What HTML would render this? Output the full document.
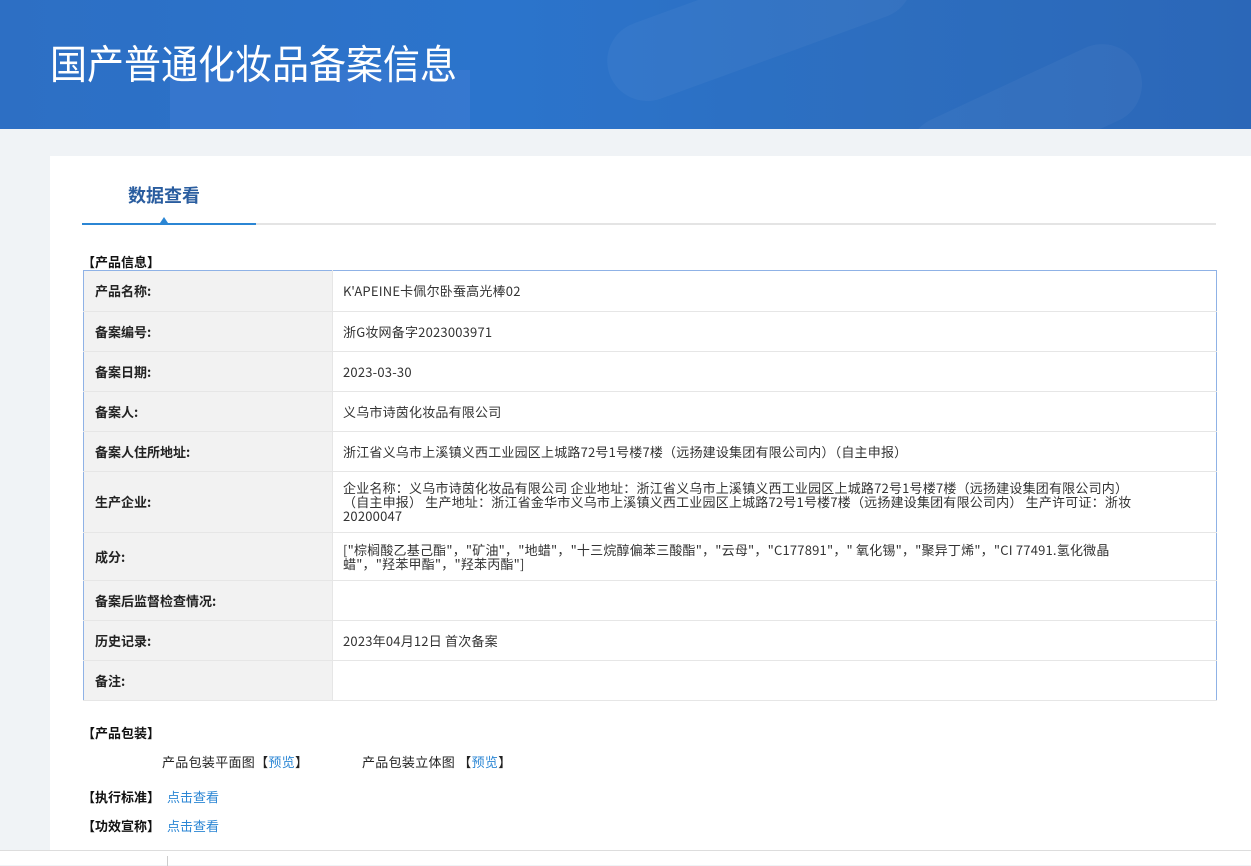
<!DOCTYPE html>
<html><head><meta charset="utf-8"><style>
*{margin:0;padding:0;box-sizing:border-box}
body{width:1251px;height:865px;overflow:hidden;background:#f0f3f6;font-family:"Noto Sans CJK SC","Liberation Sans",sans-serif;color:#333;position:relative}
.hdr{position:absolute;left:0;top:0;width:1251px;height:129px;background:linear-gradient(90deg,#2d6fc4 0%,#2b74cc 40%,#2d6ebf 70%,#2b67b8 100%);overflow:hidden}
.hdr h1{position:absolute;left:50px;top:32px;font-size:37px;font-weight:normal;color:#fff;font-family:"Noto Sans CJK SC",sans-serif;transform:scaleY(1.08);transform-origin:left top}
.panel{position:absolute;left:50px;top:156px;width:1201px;height:694px;background:#fff}
.tab{position:absolute;left:128px;top:182px;font-size:18px;font-weight:bold;color:#2a5d9f}
.line{position:absolute;left:82px;top:223px;width:1134px;height:2px;background:#e4e4e4}
.line i{position:absolute;left:0;top:0;width:174px;height:2px;background:#2b86d4}
.tri{position:absolute;left:160px;top:217px;width:0;height:0;border-left:4px solid transparent;border-right:4px solid transparent;border-bottom:6px solid #2b86d4}
.sec{position:absolute;font-size:13px;font-weight:bold;color:#111}
table{position:absolute;left:83px;top:270px;width:1134px;border-collapse:collapse;border:1px solid #8fb2e6;font-size:13px}
td{border-bottom:1px solid #e6e6e6;vertical-align:middle;line-height:14px}
td.l{width:249px;background:#f2f2f2;font-weight:bold;padding-left:11px;color:#222;border-right:1px solid #e6e6e6}
td.v{padding-left:10px;color:#333;padding-right:40px;letter-spacing:0.2px}
a{color:#2b86d4;text-decoration:none}
.t{position:absolute;font-size:13px;color:#222;letter-spacing:0.3px}
.foot{position:absolute;left:0;top:850px;width:1251px;height:15px;background:#fff;border-top:1px solid #ddd}
.foot i{position:absolute;left:167px;top:5px;width:1px;height:10px;background:#ccc}
</style></head><body>
<div class="hdr">
<div style="position:absolute;left:170px;top:70px;width:300px;height:70px;background:rgba(80,130,220,.3)"></div>
<div style="position:absolute;left:600px;top:-20px;width:320px;height:80px;border-radius:40px;background:rgba(255,255,255,.04);transform:rotate(-20deg)"></div>
<div style="position:absolute;left:900px;top:80px;width:250px;height:80px;border-radius:40px;background:rgba(255,255,255,.04);transform:rotate(-25deg)"></div>
<h1>国产普通化妆品备案信息</h1></div>
<div class="panel"></div>
<div class="tab">数据查看</div>
<div class="line"><i></i></div>
<div class="tri"></div>
<div class="sec" style="left:82px;top:252px">【产品信息】</div>
<table>
<tr style="height:41px"><td class="l">产品名称:</td><td class="v">K'APEINE卡佩尔卧蚕高光棒02</td></tr>
<tr style="height:40px"><td class="l">备案编号:</td><td class="v">浙G妆网备字2023003971</td></tr>
<tr style="height:40px"><td class="l">备案日期:</td><td class="v">2023-03-30</td></tr>
<tr style="height:40px"><td class="l">备案人:</td><td class="v">义乌市诗茵化妆品有限公司</td></tr>
<tr style="height:40px"><td class="l">备案人住所地址:</td><td class="v">浙江省义乌市上溪镇义西工业园区上城路72号1号楼7楼（远扬建设集团有限公司内）（自主申报）</td></tr>
<tr style="height:61px"><td class="l">生产企业:</td><td class="v">企业名称：义乌市诗茵化妆品有限公司 企业地址：浙江省义乌市上溪镇义西工业园区上城路72号1号楼7楼（远扬建设集团有限公司内）<br>（自主申报） 生产地址：浙江省金华市义乌市上溪镇义西工业园区上城路72号1号楼7楼（远扬建设集团有限公司内） 生产许可证：浙妆<br>20200047</td></tr>
<tr style="height:48px"><td class="l">成分:</td><td class="v">["棕榈酸乙基己酯"，"矿油"，"地蜡"，"十三烷醇偏苯三酸酯"，"云母"，"C177891"，" 氧化锡"，"聚异丁烯"，"CI 77491.氢化微晶<br>蜡"，"羟苯甲酯"，"羟苯丙酯"]</td></tr>
<tr style="height:40px"><td class="l">备案后监督检查情况:</td><td class="v"></td></tr>
<tr style="height:40px"><td class="l">历史记录:</td><td class="v">2023年04月12日 首次备案</td></tr>
<tr style="height:40px"><td class="l">备注:</td><td class="v"></td></tr>
</table>
<div class="sec" style="left:82px;top:723px">【产品包装】</div>
<div class="t" style="left:162px;top:752px">产品包装平面图【<a>预览</a>】</div>
<div class="t" style="left:362px;top:752px">产品包装立体图 【<a>预览</a>】</div>
<div class="sec" style="left:82px;top:787px">【执行标准】 <a style="font-weight:normal;margin-left:4px">点击查看</a></div>
<div class="sec" style="left:82px;top:816px">【功效宣称】 <a style="font-weight:normal;margin-left:4px">点击查看</a></div>
<div class="foot"><i></i></div>
</body></html>
